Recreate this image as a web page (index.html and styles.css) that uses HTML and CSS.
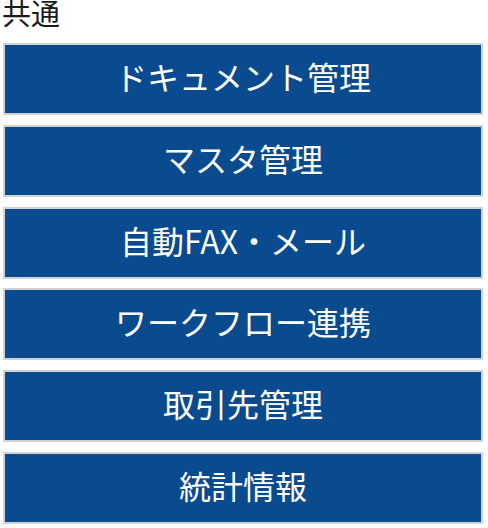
FILE: index.html
```html
<!DOCTYPE html>
<html lang="ja">
<head>
<meta charset="utf-8">
<link rel="stylesheet" href="styles.css">
</head>
<body>
<div class="page">
  <div class="title">共通</div>
  <div class="menu">
    <div class="btn">ドキュメント管理</div>
    <div class="btn">マスタ管理</div>
    <div class="btn">自動FAX・メール</div>
    <div class="btn">ワークフロー連携</div>
    <div class="btn">取引先管理</div>
    <div class="btn">統計情報</div>
  </div>
</div>
</body>
</html>
```
FILE: styles.css
```css
html, body {
  margin: 0;
  padding: 0;
  background: #ffffff;
}
.page {
  padding: 0 0 0 3px;
  font-family: "Noto Sans CJK JP", "Noto Sans", sans-serif;
}
.title {
  font-size: 29px;
  line-height: 25px;
  color: #1a1a1a;
  margin: 0 0 18px -1px;
}
.menu {
  display: flex;
  flex-direction: column;
  gap: 9.8px;
  width: 480px;
}
.btn {
  box-sizing: border-box;
  height: 72px;
  padding-bottom: 6px;
  border: 2px solid #d2d2d2;
  background: #0a4a8f;
  color: #ffffff;
  font-size: 32px;
  display: flex;
  align-items: center;
  justify-content: center;
}
```
